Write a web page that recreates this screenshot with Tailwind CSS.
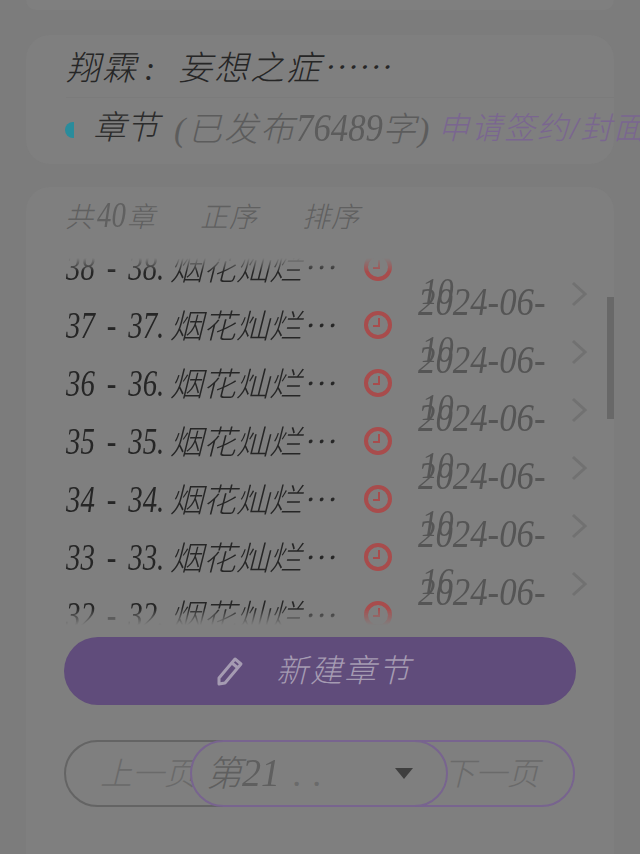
<!DOCTYPE html>
<html lang="zh"><head><meta charset="utf-8">
<script src="https://cdn.jsdelivr.net/npm/@tailwindcss/browser@4"></script>
</head>
<body class="m-0 bg-[#7c7c7c]">
<div class="w-[640px] h-[854px] overflow-hidden flex flex-col [font-family:'Liberation_Serif','Noto_Sans_CJK_SC',serif] italic font-extralight">
  <div class="h-[10px] mx-[26px] shrink-0 rounded-b-[24px] bg-[#7f7f7f]"></div>
  <section class="mt-[25px] mx-[26px] h-[129px] shrink-0 rounded-[24px] bg-[#7f7f7f] pl-[40px] relative">
    <h1 class="h-[63px] pt-[9px] text-[34px] leading-[44px] text-[#262626] font-extralight whitespace-nowrap border-b border-[#7b7b7b] tracking-[2px]">翔霖<span class="inline-block w-[40px] pl-[6px]">:</span>妄想之症<span class="[font-family:'Noto_Sans_CJK_SC'] tracking-normal">……</span></h1>
    <div class="flex items-center h-[62px] whitespace-nowrap">
      <span class="absolute left-[39px] top-[87px] w-[9px] h-[16px] rounded-l-full bg-[#2a8c9c]"></span>
      <span class="ml-[27px] text-[33px] text-[#2c2c2c]">章节</span>
      <span class="ml-[15px] text-[34px] text-[#5c5c5c] tracking-[2px]"><span class="inline-block w-[14px]">(</span>已发布<span class="inline-block w-[86px] origin-left scale-x-[.87] text-[40px] tracking-normal leading-none">76489</span>字<span class="inline-block w-[20px]">)</span></span>
      <span class="text-[31px] text-[#7a6690] tracking-[2px]">申请签约/封面</span>
    </div>
  </section>
  <section class="mt-[23px] mx-[26px] flex-1 rounded-t-[24px] bg-[#7f7f7f] relative">
    <div class="flex items-center h-[61px] pl-[39px] text-[28px] text-[#606060] whitespace-nowrap">
      <span class="w-[135px]">共<span class="inline-block w-[30px] ml-[4px] origin-left scale-x-[.8] text-[36px] leading-none">40</span>章</span><span class="w-[102px] tracking-[1px]">正序</span><span class="tracking-[1px]">排序</span>
    </div>
    <div class="h-[367px] mt-[10px] overflow-hidden [mask-image:linear-gradient(to_bottom,transparent,black_14px,black_350px,transparent)]">
      <div class="-mt-[20px] flex flex-col">
        <div class="flex items-center h-[58px] shrink-0 pl-[40px] relative whitespace-nowrap">
          <span class="w-[272px] text-[33px] leading-[40px] text-[#262626]"><span class="inline-block w-[104px] origin-left scale-x-[.78] text-[37px] [word-spacing:6px]">38 - 38.</span>烟花灿烂<span class="[font-family:'Noto_Sans_CJK_SC']">…</span></span>
          <svg class="ml-[26px] w-[28px] h-[28px]" viewBox="0 0 28 28" fill="none" stroke="#a84c4c"><circle cx="14" cy="14" r="12" stroke-width="4"/><path d="M15 7v8H9" stroke-width="2"/></svg>
          <span class="absolute left-[392px] top-[44px] origin-left scale-x-[.87] text-[40px] leading-[40px] text-[#555]">2024-06-<span class="absolute left-[4px] -top-[10px] text-[37px]">10</span></span>
          <svg class="absolute left-[544px] top-[43px] w-[18px] h-[26px]" viewBox="0 0 18 26" fill="none" stroke="#717171" stroke-width="3"><path d="M3 2l12 11L3 24"/></svg>
        </div>
        <div class="flex items-center h-[58px] shrink-0 pl-[40px] relative whitespace-nowrap">
          <span class="w-[272px] text-[33px] leading-[40px] text-[#262626]"><span class="inline-block w-[104px] origin-left scale-x-[.78] text-[37px] [word-spacing:6px]">37 - 37.</span>烟花灿烂<span class="[font-family:'Noto_Sans_CJK_SC']">…</span></span>
          <svg class="ml-[26px] w-[28px] h-[28px]" viewBox="0 0 28 28" fill="none" stroke="#a84c4c"><circle cx="14" cy="14" r="12" stroke-width="4"/><path d="M15 7v8H9" stroke-width="2"/></svg>
          <span class="absolute left-[392px] top-[44px] origin-left scale-x-[.87] text-[40px] leading-[40px] text-[#555]">2024-06-<span class="absolute left-[4px] -top-[10px] text-[37px]">10</span></span>
          <svg class="absolute left-[544px] top-[43px] w-[18px] h-[26px]" viewBox="0 0 18 26" fill="none" stroke="#717171" stroke-width="3"><path d="M3 2l12 11L3 24"/></svg>
        </div>
        <div class="flex items-center h-[58px] shrink-0 pl-[40px] relative whitespace-nowrap">
          <span class="w-[272px] text-[33px] leading-[40px] text-[#262626]"><span class="inline-block w-[104px] origin-left scale-x-[.78] text-[37px] [word-spacing:6px]">36 - 36.</span>烟花灿烂<span class="[font-family:'Noto_Sans_CJK_SC']">…</span></span>
          <svg class="ml-[26px] w-[28px] h-[28px]" viewBox="0 0 28 28" fill="none" stroke="#a84c4c"><circle cx="14" cy="14" r="12" stroke-width="4"/><path d="M15 7v8H9" stroke-width="2"/></svg>
          <span class="absolute left-[392px] top-[44px] origin-left scale-x-[.87] text-[40px] leading-[40px] text-[#555]">2024-06-<span class="absolute left-[4px] -top-[10px] text-[37px]">10</span></span>
          <svg class="absolute left-[544px] top-[43px] w-[18px] h-[26px]" viewBox="0 0 18 26" fill="none" stroke="#717171" stroke-width="3"><path d="M3 2l12 11L3 24"/></svg>
        </div>
        <div class="flex items-center h-[58px] shrink-0 pl-[40px] relative whitespace-nowrap">
          <span class="w-[272px] text-[33px] leading-[40px] text-[#262626]"><span class="inline-block w-[104px] origin-left scale-x-[.78] text-[37px] [word-spacing:6px]">35 - 35.</span>烟花灿烂<span class="[font-family:'Noto_Sans_CJK_SC']">…</span></span>
          <svg class="ml-[26px] w-[28px] h-[28px]" viewBox="0 0 28 28" fill="none" stroke="#a84c4c"><circle cx="14" cy="14" r="12" stroke-width="4"/><path d="M15 7v8H9" stroke-width="2"/></svg>
          <span class="absolute left-[392px] top-[44px] origin-left scale-x-[.87] text-[40px] leading-[40px] text-[#555]">2024-06-<span class="absolute left-[4px] -top-[10px] text-[37px]">10</span></span>
          <svg class="absolute left-[544px] top-[43px] w-[18px] h-[26px]" viewBox="0 0 18 26" fill="none" stroke="#717171" stroke-width="3"><path d="M3 2l12 11L3 24"/></svg>
        </div>
        <div class="flex items-center h-[58px] shrink-0 pl-[40px] relative whitespace-nowrap">
          <span class="w-[272px] text-[33px] leading-[40px] text-[#262626]"><span class="inline-block w-[104px] origin-left scale-x-[.78] text-[37px] [word-spacing:6px]">34 - 34.</span>烟花灿烂<span class="[font-family:'Noto_Sans_CJK_SC']">…</span></span>
          <svg class="ml-[26px] w-[28px] h-[28px]" viewBox="0 0 28 28" fill="none" stroke="#a84c4c"><circle cx="14" cy="14" r="12" stroke-width="4"/><path d="M15 7v8H9" stroke-width="2"/></svg>
          <span class="absolute left-[392px] top-[44px] origin-left scale-x-[.87] text-[40px] leading-[40px] text-[#555]">2024-06-<span class="absolute left-[4px] -top-[10px] text-[37px]">10</span></span>
          <svg class="absolute left-[544px] top-[43px] w-[18px] h-[26px]" viewBox="0 0 18 26" fill="none" stroke="#717171" stroke-width="3"><path d="M3 2l12 11L3 24"/></svg>
        </div>
        <div class="flex items-center h-[58px] shrink-0 pl-[40px] relative whitespace-nowrap">
          <span class="w-[272px] text-[33px] leading-[40px] text-[#262626]"><span class="inline-block w-[104px] origin-left scale-x-[.78] text-[37px] [word-spacing:6px]">33 - 33.</span>烟花灿烂<span class="[font-family:'Noto_Sans_CJK_SC']">…</span></span>
          <svg class="ml-[26px] w-[28px] h-[28px]" viewBox="0 0 28 28" fill="none" stroke="#a84c4c"><circle cx="14" cy="14" r="12" stroke-width="4"/><path d="M15 7v8H9" stroke-width="2"/></svg>
          <span class="absolute left-[392px] top-[44px] origin-left scale-x-[.87] text-[40px] leading-[40px] text-[#555]">2024-06-<span class="absolute left-[4px] -top-[10px] text-[37px]">16</span></span>
          <svg class="absolute left-[544px] top-[43px] w-[18px] h-[26px]" viewBox="0 0 18 26" fill="none" stroke="#717171" stroke-width="3"><path d="M3 2l12 11L3 24"/></svg>
        </div>
        <div class="flex items-center h-[58px] shrink-0 pl-[40px] relative whitespace-nowrap">
          <span class="w-[272px] text-[33px] leading-[40px] text-[#262626]"><span class="inline-block w-[104px] origin-left scale-x-[.78] text-[37px] [word-spacing:6px]">32 - 32.</span>烟花灿烂<span class="[font-family:'Noto_Sans_CJK_SC']">…</span></span>
          <svg class="ml-[26px] w-[28px] h-[28px]" viewBox="0 0 28 28" fill="none" stroke="#a84c4c"><circle cx="14" cy="14" r="12" stroke-width="4"/><path d="M15 7v8H9" stroke-width="2"/></svg>
        </div>
      </div>
    </div>
    <div class="absolute left-[581px] top-[110px] w-[7px] h-[122px] bg-[#686868]"></div>
    <button class="mt-[12px] ml-[38px] w-[512px] h-[68px] rounded-full bg-[#604c7b] flex items-center justify-center pr-[12px] text-[32px] text-[#a59bb2] italic">
      <svg class="w-[28px] h-[30px] mr-[32px]" viewBox="0 0 28 30" fill="none" stroke="#a59bb2" stroke-width="3" stroke-linejoin="round"><path d="M3 22L19 3l6 5L9 27l-6 1z"/><path d="M16 7l6 5"/></svg>
      <span class="tracking-[2px]">新建章节</span>
    </button>
    <div class="flex mt-[35px] ml-[38px] w-[511px] h-[67px] text-[32px]">
      <div class="w-[190px] shrink-0 rounded-full border-2 border-[#646464] flex items-center pl-[34px] text-[#6a6a6a] whitespace-nowrap">上一页</div>
      <div class="relative z-10 -ml-[64px] w-[258px] shrink-0 rounded-full border-2 border-[#78648f] bg-[#7f7f7f] flex items-center pl-[14px] pr-[33px] justify-between text-[#5f5f5f]">
        <span class="text-[36px] whitespace-nowrap">第<span class="inline-block w-[38px] origin-left scale-x-[.95] text-[40px] leading-none">21</span><span class="text-[#6a6a6a] [word-spacing:2px] ml-[13px]">. .</span></span>
        <span class="w-0 h-0 border-x-[9px] border-x-transparent border-t-[11px] border-t-[#3f3f3f]"></span>
      </div>
      <div class="-ml-[64px] flex-1 rounded-full border-2 border-[#78648f] flex items-center justify-end pr-[34px] text-[#6a6a6a] whitespace-nowrap">下一页</div>
    </div>
  </section>
</div>
</body></html>
